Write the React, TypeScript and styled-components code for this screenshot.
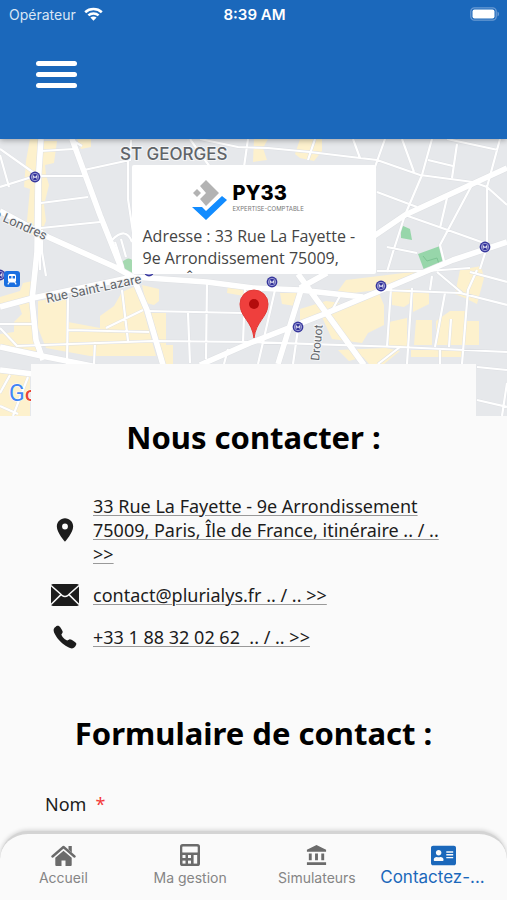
import React from 'react';
import styled, { createGlobalStyle, css } from 'styled-components';
import { FaAddressCard } from 'react-icons/fa';
import { MdAccountBalance, MdPlace } from 'react-icons/md';
import { IoCall } from 'react-icons/io5';

const BLUE = '#1b68bb';
const SURFACE = '#fafafa';

const GlobalStyle = createGlobalStyle`
  *, *::before, *::after { box-sizing: border-box; }
  body { margin: 0; background: ${SURFACE}; }
  button, input { font: inherit; }
`;

const Shell = styled.div`
  display: flex;
  flex-direction: column;
  height: 100vh;
  background: ${SURFACE};
  color: #1c1c1c;
  font-family: 'Noto Sans', 'Open Sans', sans-serif;
`;

const Header = styled.header`
  position: relative;
  z-index: 2;
  flex: none;
  padding-bottom: 46px;
  background: ${BLUE};
  color: #fff;
  box-shadow: 0 1px 6px rgba(0, 0, 0, 0.35);
`;

const StatusBar = styled.div`
  display: grid;
  grid-template-columns: 1fr auto 1fr;
  align-items: center;
  height: 28px;
  padding: 0 7px 0 9px;
  font-family: Inter, sans-serif;
  font-size: 14px;
`;

const Carrier = styled.span`
  display: flex;
  align-items: center;
  gap: 8px;
  color: #d9e6f5;
`;

const Clock = styled.time`
  font-weight: 600;
  font-size: 15px;
`;

const BatterySlot = styled.span`
  display: flex;
  justify-content: flex-end;
`;

const MenuButton = styled.button`
  display: flex;
  flex-direction: column;
  gap: 6px;
  margin: 28px 0 0 31px;
  padding: 5px;
  border: 0;
  background: none;
  cursor: pointer;
`;

const MenuBar = styled.span`
  width: 41px;
  height: 5px;
  border-radius: 3px;
  background: #fff;
`;

const Content = styled.main`
  flex: 1;
  min-height: 0;
  overflow-y: auto;
  scrollbar-width: none;
`;

const MapArea = styled.section`
  position: relative;
  height: 277px;
  overflow: hidden;
  background: #e8eaed;
`;

const MapDrawing = styled.svg`
  display: block;
  width: 100%;
  height: 100%;
`;

const Callout = styled.div`
  position: absolute;
  top: 26px;
  left: 50%;
  width: 244px;
  height: 109px;
  padding: 13px 8px 0 11px;
  overflow: hidden;
  transform: translateX(-50%);
  border-radius: 2px;
  background: #fff;
  color: #444;
  font-family: 'Open Sans', 'Noto Sans', sans-serif;
`;

const Logo = styled.div`
  display: flex;
  align-items: flex-start;
  gap: 5px;
  height: 47px;
  padding-left: 49px;
`;

const LogoWords = styled.div`
  display: flex;
  flex-direction: column;
  padding-top: 3px;
  font-family: Inter, sans-serif;
`;

const LogoName = styled.strong`
  color: #000;
  font-size: 20px;
  font-weight: 800;
  line-height: 24px;
`;

const LogoTagline = styled.span`
  color: #777;
  font-size: 6px;
  line-height: 8px;
  white-space: nowrap;
`;

const Address = styled.p`
  margin: 0;
  font-size: 16px;
  line-height: 22px;
`;

const Sheet = styled.div`
  position: relative;
  margin: -52px 31px 0;
  padding: 52px 14px 40px;
  background: ${SURFACE};
`;

const Title = styled.h2`
  margin: 0;
  color: #000;
  font-size: 31px;
  font-weight: 700;
  line-height: 42px;
  text-align: center;
`;

const ContactList = styled.ul`
  display: flex;
  flex-direction: column;
  gap: 17px;
  margin: 0 0 62px;
  padding: 36px 8px 0 6px;
  list-style: none;
`;

const ContactRow = styled.li`
  display: grid;
  grid-template-columns: 28px 1fr;
  align-items: center;
  column-gap: 14px;
`;

const ContactIcon = styled.span`
  display: flex;
  justify-content: center;
`;

const ContactLink = styled.a`
  color: #1c1c1c;
  font-size: 18px;
  line-height: 24px;
  text-decoration: underline;
  text-decoration-color: #999;
  text-decoration-thickness: 1px;
  text-underline-offset: 2px;
`;

const Form = styled.form`
  display: flex;
  flex-direction: column;
  gap: 16px;
  padding-top: 36px;
`;

const FieldLabel = styled.label`
  font-size: 18px;
  line-height: 28px;
`;

const Required = styled.span`
  margin-left: 9px;
  color: #f33b3b;
`;

const TextField = styled.input`
  width: 100%;
  height: 44px;
  padding: 0 12px;
  border: 1px solid #ccc;
  border-radius: 4px;
  background: #fff;
  font-size: 18px;
`;

const TabBar = styled.nav`
  position: relative;
  z-index: 2;
  flex: none;
  display: grid;
  grid-template-columns: repeat(4, 1fr);
  height: 69px;
  border-top: 3px solid #d4d4d4;
  border-radius: 28px 28px 0 0;
  background: ${SURFACE};
  box-shadow: 0 -1px 4px rgba(0, 0, 0, 0.16);
`;

const Tab = styled.a<{ $active?: boolean }>`
  display: flex;
  flex-direction: column;
  align-items: center;
  gap: 0;
  min-width: 0;
  padding-top: 8px;
  color: #6b6b6b;
  font-family: Inter, sans-serif;
  font-size: 14px;
  text-decoration: none;
  ${({ $active }) =>
    $active &&
    css`
      color: ${BLUE};
      font-size: 17px;
    `}
`;

const TabIcon = styled.span`
  display: flex;
  align-items: center;
  justify-content: center;
  height: 26px;
`;

const TabLabel = styled.span<{ $active?: boolean }>`
  align-self: ${({ $active }) => ($active ? 'flex-start' : 'center')};
  color: ${({ $active }) => ($active ? BLUE : '#858585')};
  line-height: ${({ $active }) => ($active ? '18px' : '20px')};
  white-space: nowrap;
`;

const Wifi = () => (
  <svg width="19" height="14" viewBox="0 0 19 14" fill="none" stroke="#fff" strokeWidth="2.6" aria-hidden="true">
    <path d="M1.2 5.2C5.8 1 13.2 1 17.8 5.2" />
    <path d="M4.4 8.4c2.9-2.6 7.3-2.6 10.2 0" />
    <path d="M9.5 13.8 6.4 10.6c1.7-1.5 4.5-1.5 6.2 0z" fill="#fff" stroke="none" />
  </svg>
);

const Battery = () => (
  <svg width="30" height="14" viewBox="0 0 30 14" aria-hidden="true">
    <rect x=".8" y=".8" width="25.4" height="12.4" rx="3.6" fill="none" stroke="#6a9ad3" strokeWidth="1.3" />
    <rect x="2.5" y="2.5" width="22" height="9" rx="2" fill="#fff" />
    <path d="M27.5 4.5c2 .8 2 4.2 0 5z" fill="#6a9ad3" />
  </svg>
);

const LogoMark = () => (
  <svg width="36" height="42" viewBox="0 0 36 42" aria-hidden="true">
    <path d="M14 2 27 15 14 28 8 21 14 15 8 8z" fill="#b3b3b3" />
    <path d="m5 11 4 4-4 4-4-4z" fill="#b3b3b3" />
    <path d="M0 29h10l4 4L30 18l5 4-21 20z" fill="#128cff" />
  </svg>
);

const Envelope = () => (
  <svg width="28" height="22" viewBox="0 0 28 22" aria-hidden="true">
    <rect width="28" height="22" rx="2" fill="#1c1c1c" />
    <path d="M0 1.5 11 11.3q3 2.4 6 0L28 1.5M0 20.5 10 10.6M28 20.5 18 10.6" fill="none" stroke="#fafafa" strokeWidth="1.5" />
  </svg>
);

const Calculator = () => (
  <svg width="20" height="22" viewBox="0 0 20 22" aria-hidden="true">
    <rect width="20" height="22" rx="2.6" fill="#6b6b6b" />
    <g fill="#fafafa">
      <rect x="2.3" y="2.4" width="15.4" height="6.2" rx=".6" />
      <rect x="2.5" y="11" width="3" height="3" />
      <rect x="8" y="11" width="3" height="3" />
      <rect x="13.6" y="11" width="3.6" height="8.6" />
      <rect x="2.5" y="16.6" width="3" height="3" />
      <rect x="8" y="16.6" width="3" height="3" />
    </g>
  </svg>
);

const House = () => (
  <svg width="25" height="21" viewBox="0 0 25 21" aria-hidden="true">
    <path d="M1.5 11.5 12.5 2l11 9.5" fill="none" stroke="#6b6b6b" strokeWidth="2.4" strokeLinecap="round" strokeLinejoin="round" />
    <path d="M17.5 1h3.3v6.5l-3.3-2.9z" fill="#6b6b6b" />
    <path d="m12.5 5.7 8.2 7.1V20q0 1-1 1h-5.2v-5.6h-4V21H5.3q-1 0-1-1v-7.2z" fill="#6b6b6b" />
  </svg>
);

const builtUp = [
  'M30 0h11l-3 50-2 48-10-6 4-42-6-2 2-26z',
  'M43 2h14l-3 22-9 2 1 10 3 10-5 20 2 16-4 10-6-2z',
  'M77 0h14v8l-10 2z',
  'M254 0h14l-5 9 4 12-14 2z',
  'M300 0h22v12l-8 10-14-3-5-4z',
  'M0 162l32-4 4 42 6 19-42-12v-12l14-2v-10l8-8-4-12-18 6z',
  'M0 158l20-6 3-8 10-2v14L0 166z',
  'M38 162l28-5 2 26 32 6v-12l14-10 8-14 14-6 8 26 12 44H90l-44-8-8-20z',
  'M142 146l17 4v12l-5 4-8-2z',
  'M148 174h18v32h7v19h-12z',
  'M228 146l16 3v8l-17-3z',
  'M346 141l66-8 18-2-52 20-43 5z',
  'M280 154h20l-5 13-13-2z',
  'M300 170l26-8 14 2-20 10-20 12z',
  'M322 178l56-26 6 14v20l-16 8-6 10-30-4z',
  'M338 211l48-2 14 3-16 13h-15l-6-7-14 4z',
  'M392 151l18-1v14l-6 4-12-2z',
  'M413 153h16v12l-16 8z',
  'M389 183l18-4v28h-18z',
  'M416 181h16v25h-18z',
  'M436 182l14-10h16v10h13v24h-43z',
  'M411 211h52l-2 7h-50z',
  'M460 131l21-4 3 12-7 26-12-6-10-4z',
  'M0 234l30 3v40H0z',
];

const streets = [
  'M0 10 34 34M0 48l35-11M0 16l9 32M41 37h42M84 31l46-10 1-20M41 64l47-6M41 89l59-6M41 12l33-2',
  'M112 101q14-14 20 2M115 103l8 25M121 100l5 18M42 91v22l4 24M70 0l12 7M128 18v42l6 40',
  'M200 0l38 8 30 1 42 4 67 8 43 15 53 7 14 5 20 18',
  'M248 0l-4 28M315 0l-7 21M353 0l7 19M385 0l-10 28M402 0l12 33M447 0l51 11M457 5l-5 34M428 21l25 6M190 0l20 28',
  'M432 0l-10 36-17 40-12 37-6 20M500 0l-13 48v60l-7 22M377 53l40 15M405 76l37 13 45 16M447 59l-7 30M473 44l-33 62 5 20M387 108l30 6',
  'M377 132h50l43-3M0 185h33M0 189l17 18 136-5 97 1 150 5 107 5M147 172l96 2M143 171l-37 18M68 191l81 2M122 151l6 51M68 159l-1 66M95 203l-1 22M40 131V0',
  'M275 151l-17 74M298 190l-5 35M340 157l-10 18M391 149l-4 59M412 149l-5 76M383 151l77 3 47 12M432 137l-2 14M437 133l25 21',
  'M477 131l-9 20-6 74M470 133l37 10M445 154l-10 54M451 180l-2 28M400 208l-22 17M440 209v16M477 228l30 3M477 261l30 7M507 244l-5 33',
  'M207 143l-1 77M245 150l-2 54M188 174l2 50M228 210l-4 15M10 236 0 254M28 238 13 277M0 267l18 8',
];

const avenues = [
  'M41 0l-3 46-1 67-5 48 4 40 7 20',
  'M72 0l28 76 22 55M0 72l48 26 67 30 18 10 14 33 16 55',
  'M133 138l74 5 46 6 47 2 63 7M133 138l-100 21-33 9M0 208l37 8 60 12M0 231l33 4',
  'M507 29 405 76l-50 34M507 103l-54 18-71 30-60 25-72 28-50 22',
  'M298 135l66 91M302 148l-24 77M327 134l-27 15',
];

const stations = [
  [35, 38],
  [485, 108],
  [272, 143],
  [381, 147],
  [298, 188],
  [149, 132],
  [0, 136],
];

const CityMap = () => (
  <MapDrawing viewBox="0 0 507 277" preserveAspectRatio="xMidYMid slice" role="img" aria-label="Plan du quartier">
    <rect width="507" height="277" fill="#e6e8eb" />
    <path d={builtUp.join('')} fill="#fdf1cd" />
    <path d="M121 124q8-8 12-2v14q-10-2-12-12z" fill="#a5d9b0" />
    <path d="m401 86 9 4 2 11-11-2zM418 115l22-8 5 16-21 8z" fill="#97d6aa" />
    <path d="m423 117 4 5 10-3 2 6-10 3" fill="none" stroke="#7cc493" strokeWidth="1" />
    <g fill="none" strokeLinejoin="round">
      <path d={streets.join('')} stroke="#dddfe3" strokeWidth="3" />
      <path d={avenues.join('')} stroke="#dfe1e4" strokeWidth="6.6" />
      <path d={streets.join('')} stroke="#fff" strokeWidth="2.2" />
      <path d={avenues.join('')} stroke="#fff" strokeWidth="5.6" />
    </g>
    {stations.map(([x, y]) => (
      <g key={`${x}-${y}`} transform={`translate(${x} ${y})`}>
        <circle r="5.4" fill="#34349b" />
        <circle r="3.7" fill="none" stroke="#c9c9ee" strokeWidth=".7" />
        <path d="M-1.8 1.6v-3L0 .8l1.8-2.2v3" fill="none" stroke="#fff" strokeWidth="1" />
      </g>
    ))}
    <g transform="translate(4 132)">
      <rect width="16" height="16" rx="3" fill="#1a6fe0" />
      <rect x="4" y="3" width="8" height="8.4" rx="2" fill="#fff" />
      <path d="M5 5h2.4v2.6H5zM8.6 5H11v2.6H8.6z" fill="#1a6fe0" />
      <path d="m5.4 11-1.6 2.4M10.6 11l1.6 2.4" stroke="#fff" strokeWidth="1.2" />
    </g>
    <g fontFamily="Roboto, sans-serif" fontSize="13" fill="#606469" stroke="#f4f5f6" strokeWidth="2" paintOrder="stroke">
      <text x="120" y="21" fontFamily="Inter, sans-serif" fontSize="17" fontWeight="500">ST GEORGES</text>
      <text transform="translate(-14 75) rotate(24)">de Londres</text>
      <text transform="translate(47 164) rotate(-12)">Rue Saint-Lazare</text>
      <text transform="translate(319 222) rotate(-84)" fontSize="12">Drouot</text>
    </g>
    <g fontFamily="Roboto, sans-serif" stroke="#fff" strokeWidth="1" paintOrder="stroke">
      <text x="9" y="262" fontSize="23" fill="#4285f4">G</text>
      <text x="25" y="262" fontSize="20" fill="#ea4335" fontWeight="500">o</text>
    </g>
    <path d="M254 199c-2-17-14-21-14-34a14 14 0 0 1 28 0c0 13-12 17-14 34z" fill="#ef3f3d" stroke="#e23a36" strokeWidth="1" />
    <circle cx="254" cy="165" r="5" fill="#b30c0c" />
  </MapDrawing>
);

const contacts = [
  {
    href: 'https://maps.google.com/?q=33+Rue+La+Fayette+75009+Paris',
    icon: <MdPlace size={32} />,
    text: '33 Rue La Fayette - 9e Arrondissement 75009, Paris, Île de France, itinéraire .. / .. >>',
  },
  { href: 'mailto:contact@plurialys.fr', icon: <Envelope />, text: 'contact@plurialys.fr .. / .. >>' },
  { href: 'tel:+33188320262', icon: <IoCall size={26} />, text: '+33 1 88 32 02 62\u00a0 .. / .. >>' },
];

const tabs = [
  { href: '#accueil', icon: <House />, label: 'Accueil' },
  { href: '#gestion', icon: <Calculator />, label: 'Ma gestion' },
  { href: '#simulateurs', icon: <MdAccountBalance size={23} />, label: 'Simulateurs' },
  { href: '#contact', icon: <FaAddressCard size={25} />, label: 'Contactez-...', active: true },
];

export default function App() {
  return (
    <Shell>
      <GlobalStyle />
      <Header>
        <StatusBar>
          <Carrier>
            Opérateur
            <Wifi />
          </Carrier>
          <Clock>8:39 AM</Clock>
          <BatterySlot>
            <Battery />
          </BatterySlot>
        </StatusBar>
        <MenuButton type="button" aria-label="Menu">
          <MenuBar />
          <MenuBar />
          <MenuBar />
        </MenuButton>
      </Header>

      <Content>
        <MapArea>
          <CityMap />
          <Callout>
            <Logo>
              <LogoMark />
              <LogoWords>
                <LogoName>PY33</LogoName>
                <LogoTagline>EXPERTISE-COMPTABLE</LogoTagline>
              </LogoWords>
            </Logo>
            <Address>Adresse : 33 Rue La Fayette - 9e Arrondissement 75009, Paris, Île de France</Address>
          </Callout>
        </MapArea>

        <Sheet>
          <Title>Nous contacter :</Title>
          <ContactList>
            {contacts.map(({ href, icon, text }) => (
              <ContactRow key={href}>
                <ContactIcon>{icon}</ContactIcon>
                <span>
                  <ContactLink href={href}>{text}</ContactLink>
                </span>
              </ContactRow>
            ))}
          </ContactList>
          <Title>Formulaire de contact :</Title>
          <Form>
            <FieldLabel htmlFor="nom">
              Nom<Required>*</Required>
            </FieldLabel>
            <TextField id="nom" name="nom" type="text" required />
          </Form>
        </Sheet>
      </Content>

      <TabBar>
        {tabs.map(({ href, icon, label, active }) => (
          <Tab key={href} href={href} $active={active} aria-current={active ? 'page' : undefined}>
            <TabIcon>{icon}</TabIcon>
            <TabLabel $active={active}>{label}</TabLabel>
          </Tab>
        ))}
      </TabBar>
    </Shell>
  );
}
